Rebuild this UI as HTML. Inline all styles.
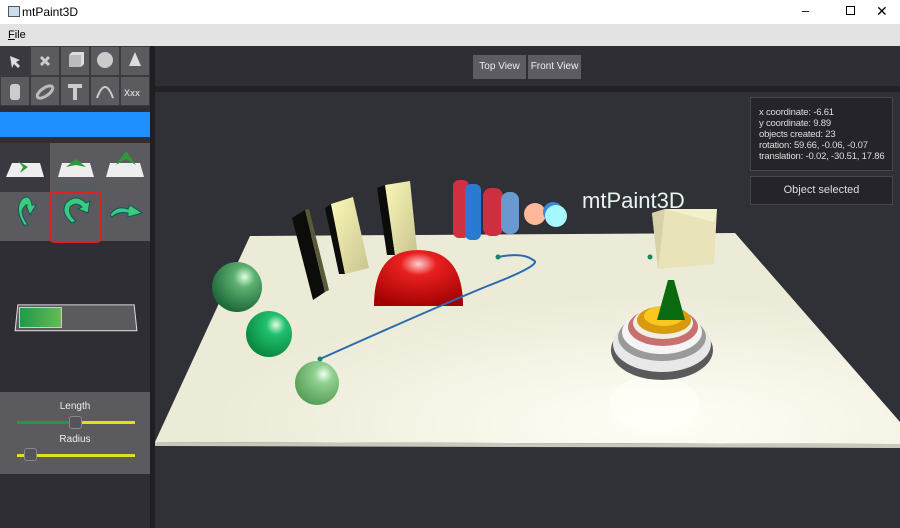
<!DOCTYPE html>
<html><head><meta charset="utf-8"><style>
*{margin:0;padding:0;box-sizing:border-box}
body{width:900px;height:528px;overflow:hidden;background:#2f2e35;font-family:"Liberation Sans",sans-serif;position:relative}
.abs{position:absolute}
.title{left:0;top:0;width:900px;height:24px;background:#fff;font-size:12px;color:#000}
.menu{left:0;top:24px;width:900px;height:22px;background:#e3e3e3;font-size:11px}
.tb{background:#5a5a5f;border:1px solid #3a3a40}
.btn{background:#5d5c62;color:#eee;font-size:10px;text-align:center;line-height:24px}
.info{font-size:9.5px;color:#ddd;line-height:11px;white-space:nowrap;letter-spacing:-0.2px}
</style></head><body>
<div class="abs title"><div class="abs" style="left:8px;top:6px;width:12px;height:11px;border:1px solid #555;background:#cde"></div><span class="abs" style="left:22px;top:5px">mtPaint3D</span>
<span class="abs" style="left:802px;top:3px;font-size:13px">&#8211;</span><span class="abs" style="left:846px;top:6px;width:9px;height:9px;border:1px solid #000"></span><span class="abs" style="left:876px;top:3px;font-size:14px">&#10005;</span></div>
<div class="abs menu"><span class="abs" style="left:8px;top:5px"><u>F</u>ile</span></div>
<div class="abs" style="left:0;top:46px;width:150px;height:482px;background:#2f2e35"></div>
<div class="abs" style="left:150px;top:46px;width:5px;height:482px;background:#1f1e23"></div>
<div class="abs" style="left:0;top:46px;width:150px;height:60px;background:#3a3a40"></div>
<div class="abs tb" style="left:0;top:46px;width:30px;height:30px;background:#3a393f"></div>
<div class="abs tb" style="left:30px;top:46px;width:30px;height:30px"></div>
<div class="abs tb" style="left:60px;top:46px;width:30px;height:30px"></div>
<div class="abs tb" style="left:90px;top:46px;width:30px;height:30px"></div>
<div class="abs tb" style="left:120px;top:46px;width:30px;height:30px"></div>
<div class="abs tb" style="left:0;top:76px;width:30px;height:30px"></div>
<div class="abs tb" style="left:30px;top:76px;width:30px;height:30px"></div>
<div class="abs tb" style="left:60px;top:76px;width:30px;height:30px"></div>
<div class="abs tb" style="left:90px;top:76px;width:30px;height:30px"></div>
<div class="abs tb" style="left:120px;top:76px;width:30px;height:30px"></div>
<svg class="abs" style="left:0;top:46px" width="150" height="60">
<path d="M10 10 L20 14 L16 16 L20 20 L18 22 L14 18 L12 22 Z" fill="#ddd"/>
<path d="M41 11 L49 19 M49 11 L41 19" stroke="#ccc" stroke-width="3"/>
<rect x="69" y="9" width="12" height="12" fill="#bbb"/><path d="M69 9 L72 6 L84 6 L81 9Z M81 9 L84 6 L84 18 L81 21Z" fill="#ddd"/>
<circle cx="105" cy="14" r="8" fill="#ccc"/>
<path d="M135 6 L141 20 L129 20Z" fill="#ddd"/>
<rect x="10" y="38" width="10" height="16" rx="3" fill="#ccc"/>
<ellipse cx="45" cy="46" rx="9" ry="4" fill="none" stroke="#bbb" stroke-width="3" transform="rotate(-35 45 46)"/>
<path d="M68 38 H82 V42 H77 V54 H73 V42 H68Z" fill="#ccc"/>
<path d="M97 52 Q105 30 113 52" stroke="#ccc" fill="none" stroke-width="2"/>
<text x="124" y="50" font-size="9" fill="#ccc" font-weight="bold">Xxx</text>
</svg>
<div class="abs" style="left:0;top:112px;width:150px;height:25px;background:#1e90ff"></div>
<div class="abs" style="left:0;top:143px;width:150px;height:98px;background:#5a5a5f"></div>
<div class="abs" style="left:0;top:143px;width:50px;height:49px;background:#3a393f"></div>
<div class="abs" style="left:49px;top:191px;width:53px;height:52px;border:2px solid #e02020;border-radius:5px"></div>
<svg class="abs" style="left:0;top:143px" width="150" height="98">
<path d="M12 20 H40 L44 34 H6Z" fill="#eee"/><path d="M18 18 L28 24 L20 30 L23 24Z" fill="#2a9a3a"/>
<path d="M62 20 H90 L94 34 H58Z" fill="#eee"/><path d="M66 24 L76 16 L86 24 L76 22Z" fill="#2a9a3a"/>
<path d="M110 20 H140 L144 34 H106Z" fill="#eee"/><path d="M116 22 L126 8 L136 22 L126 16Z" fill="#2a9a3a"/>
<path d="M24 82 Q14 66 22 56 Q30 50 32 62 L36 62 L30 72 L26 62 L28 62 Q24 62 22 68 Q22 74 28 82Z" fill="#3bcc7a" stroke="#156" stroke-width="1"/>
<path d="M72 80 Q60 70 66 60 Q76 50 86 60 L90 58 L88 70 L78 66 L82 64 Q76 58 70 64 Q68 72 76 78Z" fill="#3bcc7a" stroke="#156"/>
<path d="M110 72 Q116 62 128 66 L130 62 L142 70 L128 74 L128 70 Q118 68 112 74Z" fill="#3bcc7a" stroke="#156"/>
</svg>
<div class="abs" style="left:16px;top:304px;width:120px;height:27px;background:#5a5a5f;border:1px solid #ddd;transform:perspective(60px) rotateX(6deg)"></div>
<div class="abs" style="left:19px;top:307px;width:43px;height:21px;background:linear-gradient(90deg,#1e9a4a,#66bb55);border:1px solid #ccc"></div>
<div class="abs" style="left:0;top:392px;width:150px;height:82px;background:#5a5a5f"></div>
<div class="abs" style="left:0;top:401px;width:150px;text-align:center;font-size:10px;color:#eee">Length</div>
<div class="abs" style="left:17px;top:421px;width:58px;height:3px;background:#1a9a4a"></div>
<div class="abs" style="left:75px;top:421px;width:60px;height:3px;background:#e0e020"></div>
<div class="abs" style="left:69px;top:416px;width:13px;height:13px;border:1px solid #888;background:#55545a;border-radius:3px"></div>
<div class="abs" style="left:0;top:434px;width:150px;text-align:center;font-size:10px;color:#eee">Radius</div>
<div class="abs" style="left:17px;top:454px;width:118px;height:3px;background:#e0e020"></div>
<div class="abs" style="left:24px;top:448px;width:13px;height:13px;border:1px solid #888;background:#55545a;border-radius:3px"></div>
<div class="abs" style="left:155px;top:46px;width:745px;height:40px;background:#2f2e35"></div>
<div class="abs btn" style="left:473px;top:55px;width:53px;height:24px">Top View</div>
<div class="abs btn" style="left:528px;top:55px;width:53px;height:24px">Front View</div>
<div class="abs" style="left:155px;top:86px;width:745px;height:6px;background:#222126"></div>
<svg class="abs" style="left:155px;top:92px" width="745" height="436">
<defs>
<radialGradient id="pl" cx="0.68" cy="0.9" r="0.6"><stop offset="0" stop-color="#fffff6"/><stop offset="1" stop-color="#ecebd8"/></radialGradient>
<radialGradient id="gs" cx="0.65" cy="0.3" r="0.7"><stop offset="0" stop-color="#e0ffe0"/><stop offset="0.3" stop-color="#5cb070"/><stop offset="1" stop-color="#1f6a3a"/></radialGradient>
<radialGradient id="gs2" cx="0.65" cy="0.3" r="0.7"><stop offset="0" stop-color="#e0ffe0"/><stop offset="0.3" stop-color="#22c070"/><stop offset="1" stop-color="#0a8a40"/></radialGradient>
<radialGradient id="gs3" cx="0.65" cy="0.3" r="0.7"><stop offset="0" stop-color="#f0fff0"/><stop offset="0.3" stop-color="#90d090"/><stop offset="1" stop-color="#5aa05a"/></radialGradient>
<radialGradient id="rd" cx="0.5" cy="0.25" r="0.8"><stop offset="0" stop-color="#ffd0d0"/><stop offset="0.25" stop-color="#e82020"/><stop offset="1" stop-color="#a00000"/></radialGradient>
<linearGradient id="yl" x1="0" y1="0" x2="1" y2="1"><stop offset="0" stop-color="#fbf8b8"/><stop offset="1" stop-color="#c8c490"/></linearGradient>
</defs>
<rect width="745" height="436" fill="#303037"/>
<path d="M95 144 L580 141 L745 330 L745 352 L0 350 Z" fill="url(#pl)"/>
<path d="M0 350 L745 352 L745 356 L0 354Z" fill="#c8c8bc"/>
<ellipse cx="499" cy="312" rx="45" ry="28" fill="#fffff8" opacity="0.7"/>
<!-- panels -->
<path d="M137 126 L150 118 L170 200 L158 208Z" fill="#0c0c0a"/><path d="M150 118 L154 117 L174 198 L170 200Z" fill="#5a5a3a"/>
<path d="M170 116 L176 112 L190 182 L184 182Z" fill="#0c0c0a"/><path d="M176 112 L198 105 L214 176 L190 182Z" fill="url(#yl)"/>
<path d="M222 96 L230 93 L240 163 L232 163Z" fill="#0c0c0a"/><path d="M230 93 L255 89 L262 158 L240 163Z" fill="url(#yl)"/>
<path d="M219 214 Q219 158 263 158 Q308 158 308 214 Z" fill="url(#rd)"/>
<!-- cylinders -->
<rect x="298" y="88" width="16" height="58" rx="6" fill="#d03040"/>
<rect x="310" y="92" width="16" height="56" rx="6" fill="#2a7ad0"/>
<rect x="328" y="96" width="20" height="48" rx="8" fill="#cc3040"/>
<rect x="346" y="100" width="18" height="42" rx="8" fill="#6a98d0"/>
<circle cx="380" cy="122" r="11" fill="#ffb898"/>
<circle cx="398" cy="120" r="10" fill="#3a88d8"/><circle cx="401" cy="124" r="11" fill="#a8f8ff"/>
<text x="427" y="116" font-size="22" fill="#e8f4f0">mtPaint3D</text>
<circle cx="82" cy="195" r="25" fill="url(#gs)"/>
<circle cx="114" cy="242" r="23" fill="url(#gs2)"/>
<circle cx="162" cy="291" r="22" fill="url(#gs3)"/>
<path d="M165 267 Q270 220 330 195 Q390 172 378 168 Q368 160 343 165" fill="none" stroke="#2a6ab0" stroke-width="2"/>
<circle cx="165" cy="267" r="2.5" fill="#186"/><circle cx="343" cy="165" r="2.5" fill="#186"/>
<!-- cube -->
<path d="M497 121 L510 117 L562 117 L559 172 L503 177Z" fill="#e8e3b8"/>
<path d="M497 121 L510 117 L503 177 Z" fill="#d8d2a8"/>
<path d="M510 117 L562 117 L559 130 Z" fill="#f3f0cc"/>
<circle cx="495" cy="165" r="2.5" fill="#186"/>
<!-- rings -->
<ellipse cx="507" cy="258" rx="51" ry="30" fill="#5a5a5a"/>
<ellipse cx="507" cy="252" rx="49" ry="28" fill="#e8e8e8"/>
<ellipse cx="507" cy="245" rx="44" ry="24" fill="#9a9a9a"/>
<ellipse cx="507" cy="240" rx="40" ry="22" fill="#f4f4f4"/>
<ellipse cx="508" cy="235" rx="35" ry="19" fill="#c87070"/>
<ellipse cx="508" cy="231" rx="30" ry="16" fill="#f0f0e0"/>
<ellipse cx="509" cy="228" rx="27" ry="14" fill="#d89a10"/>
<ellipse cx="509" cy="224" rx="20" ry="10" fill="#f8c820"/>
<path d="M513 188 L519 188 L530 228 L502 228Z" fill="#0a6a10"/>
</svg>
<div class="abs info" style="left:750px;top:97px;width:143px;height:74px;background:#25242a;border:1px solid #47464c;padding:9px 8px">x coordinate: -6.61<br>y coordinate: 9.89<br>objects created: 23<br>rotation: 59.66, -0.06, -0.07<br>translation: -0.02, -30.51, 17.86</div>
<div class="abs" style="left:750px;top:176px;width:143px;height:29px;background:#25242a;border:1px solid #47464c;color:#ddd;font-size:11px;text-align:center;line-height:27px">Object selected</div>
</body></html>
